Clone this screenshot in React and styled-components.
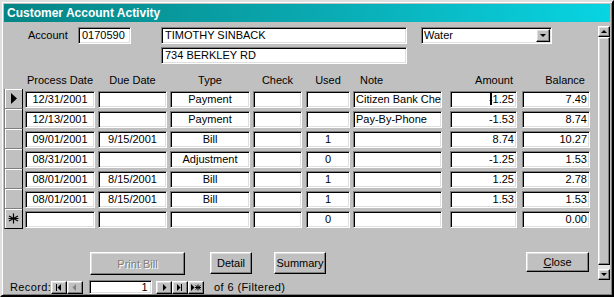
import React from "react";
import styled, { createGlobalStyle, css } from "styled-components";

const GlobalStyle = createGlobalStyle`
  html, body {
    margin: 0;
    padding: 0;
    background: #c0c0c0;
  }
  * { box-sizing: border-box; }
`;

const cols = [
  { key: "pd", w: 70, ml: 2, align: "center", head: "Process Date" },
  { key: "dd", w: 69, ml: 3, align: "center", head: "Due Date" },
  { key: "type", w: 80, ml: 3, align: "center", head: "Type" },
  { key: "check", w: 49, ml: 3, align: "center", head: "Check" },
  { key: "used", w: 44, ml: 4, align: "center", head: "Used" },
  { key: "note", w: 89, ml: 3, align: "left", head: "Note", hpad: "0 0 0 7px" },
  { key: "amt", w: 67, ml: 8, align: "right", head: "Amount", hpad: "0 4px 0 0" },
  { key: "bal", w: 68, ml: 5, align: "right", head: "Balance", hpad: "0 5px 0 0" },
];

const rows = [
  { pd: "12/31/2001", dd: "", type: "Payment", check: "", used: "", note: "Citizen Bank Checking", amt: "-1.25", bal: "7.49", current: true },
  { pd: "12/13/2001", dd: "", type: "Payment", check: "", used: "", note: "Pay-By-Phone", amt: "-1.53", bal: "8.74" },
  { pd: "09/01/2001", dd: "9/15/2001", type: "Bill", check: "", used: "1", note: "", amt: "8.74", bal: "10.27" },
  { pd: "08/31/2001", dd: "", type: "Adjustment", check: "", used: "0", note: "", amt: "-1.25", bal: "1.53" },
  { pd: "08/01/2001", dd: "8/15/2001", type: "Bill", check: "", used: "1", note: "", amt: "1.25", bal: "2.78" },
  { pd: "08/01/2001", dd: "8/15/2001", type: "Bill", check: "", used: "1", note: "", amt: "1.53", bal: "1.53" },
  { pd: "", dd: "", type: "", check: "", used: "0", note: "", amt: "", bal: "0.00", isNew: true },
];

const sunken = css`
  background: #fff;
  border-top: 1px solid #808080;
  border-left: 1px solid #808080;
  border-bottom: 1px solid #fff;
  border-right: 1px solid #fff;
  box-shadow: inset 1px 1px #000, inset -1px -1px #dfdfdf;
`;

const raised = css`
  background: #c0c0c0;
  border-top: 1px solid #fff;
  border-left: 1px solid #fff;
  border-bottom: 1px solid #000;
  border-right: 1px solid #000;
  box-shadow: inset -1px -1px #808080, inset 1px 1px #dfdfdf;
`;

const Window = styled.div`
  width: 614px;
  height: 297px;
  padding: 2px;
  border: 2px solid;
  border-color: #dfdfdf #000 #000 #dfdfdf;
  box-shadow: inset 1px 1px #fff, inset -1px -1px #808080;
  background: #c0c0c0;
  display: flex;
  flex-direction: column;
  font-family: "Liberation Sans", Arial, sans-serif;
  font-size: 11px;
  color: #000;
  overflow: hidden;
`;

const TitleBar = styled.div`
  height: 18px;
  flex: none;
  display: flex;
  align-items: center;
  padding-left: 3px;
  background: linear-gradient(to right, #058585, #0aa8b0 50%, #08d4e2);
  color: #fff;
  font-weight: bold;
  font-size: 12px;
`;

const Body = styled.div`
  height: 258px;
  flex: none;
  display: flex;
`;

const Content = styled.div`
  flex: 1;
  display: flex;
  flex-direction: column;
  padding-top: 5px;
`;

const FormRow = styled.div`
  display: flex;
  align-items: flex-start;
  margin-top: ${(p) => p.$mt || 0}px;
`;

const Label = styled.div`
  width: 74px;
  height: 17px;
  line-height: 17px;
  padding-left: 24px;
`;

const TextBox = styled.div`
  ${sunken};
  width: ${(p) => p.$w}px;
  height: 17px;
  margin-left: ${(p) => p.$ml || 0}px;
  padding: 0 3px;
  line-height: 15px;
  white-space: nowrap;
  overflow: hidden;
`;

const Combo = styled.div`
  ${sunken};
  width: 131px;
  height: 17px;
  margin-left: 14px;
  display: flex;
  align-items: stretch;
  padding: 1px 1px 1px 2px;
`;

const ComboText = styled.div`
  flex: 1;
  line-height: 13px;
`;

const DropButton = styled.div`
  ${raised};
  width: 14px;
  display: flex;
  align-items: center;
  justify-content: center;
`;

const HeaderRow = styled.div`
  display: flex;
  height: 19px;
  margin-top: 6px;
  align-items: center;
`;

const HeadCell = styled.div`
  width: ${(p) => p.$w}px;
  margin-left: ${(p) => p.$ml}px;
  text-align: ${(p) => p.$align};
  padding: ${(p) => p.$pad || 0};
  white-space: nowrap;
`;

const GridRow = styled.div`
  display: flex;
  height: 20px;
`;

const Selector = styled.div`
  width: 19px;
  height: 20px;
  flex: none;
  background: #c0c0c0;
  border-left: 1px solid #808080;
  border-right: 1px solid #000;
  border-bottom: 1px solid ${(p) => (p.$last ? "#000" : "#808080")};
  box-shadow: inset 1px 1px #fff;
  display: flex;
  align-items: center;
  justify-content: center;
`;

const Cell = styled.div`
  ${sunken};
  width: ${(p) => p.$w}px;
  height: 17px;
  margin-top: 2px;
  margin-left: ${(p) => p.$ml}px;
  text-align: ${(p) => p.$align};
  padding: 0 2px;
  line-height: 15px;
  white-space: nowrap;
  overflow: hidden;
  position: relative;
`;

const Caret = styled.span`
  position: relative;
  &::after {
    content: "";
    position: absolute;
    left: 1px;
    top: -1px;
    width: 2px;
    height: 13px;
    background: #000;
  }
`;

const ButtonRow = styled.div`
  display: flex;
  align-items: flex-start;
  margin-top: 23px;
  padding-right: 9px;
`;

const Button = styled.div`
  ${raised};
  width: ${(p) => p.$w}px;
  height: ${(p) => p.$h || 22}px;
  margin-left: ${(p) => (p.$ml === "auto" ? "auto" : `${p.$ml}px`)};
  display: flex;
  align-items: center;
  justify-content: center;
  font-size: 11px;
  color: ${(p) => (p.$disabled ? "#808080" : "#000")};
  text-shadow: ${(p) => (p.$disabled ? "1px 1px #fff" : "none")};
  u { text-decoration: underline; }
`;

const ScrollBar = styled.div`
  width: 12px;
  flex: none;
  margin-top: 4px;
  display: flex;
  flex-direction: column;
  background: #e4e4e4;
`;

const ScrollButton = styled.div`
  ${raised};
  height: 11px;
  flex: none;
  display: flex;
  align-items: center;
  justify-content: center;
`;

const Thumb = styled.div`
  ${raised};
  flex: 1;
  margin-bottom: 4px;
`;

const NavBar = styled.div`
  height: 14px;
  flex: none;
  display: flex;
  align-items: center;
  font-size: 11px;
  letter-spacing: 0.4px;
`;

const NavLabel = styled.div`
  padding-left: 6px;
  width: 47px;
`;

const NavButton = styled.div`
  ${raised};
  width: 16px;
  height: 13px;
  display: flex;
  align-items: center;
  justify-content: center;
  margin-left: ${(p) => p.$ml || 0}px;
`;

const NavBox = styled.div`
  ${sunken};
  width: 63px;
  height: 14px;
  margin-left: 6px;
  text-align: right;
  padding-right: 3px;
  line-height: 12px;
`;

const NavText = styled.div`
  margin-left: 10px;
`;

const Tri = ({ dir = "down", color = "#000" }) => {
  const pts = {
    down: "0,0 6,0 3,3",
    up: "0,3 6,3 3,0",
  }[dir];
  return (
    <svg width="7" height="4" viewBox="0 0 7 4">
      <polygon points={pts} fill={color} />
    </svg>
  );
};

const NavIcon = ({ kind }) => {
  const c = kind === "prev" ? "#808080" : "#000";
  return (
    <svg width="10" height="7" viewBox="0 0 10 7">
      {kind === "first" && (
        <>
          <rect x="2" y="0" width="1" height="7" fill={c} />
          <polygon points="7,0 7,7 3.5,3.5" fill={c} />
        </>
      )}
      {kind === "prev" && <polygon points="6,0 6,7 2.5,3.5" fill={c} />}
      {kind === "next" && <polygon points="4,0 4,7 7.5,3.5" fill={c} />}
      {kind === "last" && (
        <>
          <polygon points="2,0 2,7 5.5,3.5" fill={c} />
          <rect x="6" y="0" width="1" height="7" fill={c} />
        </>
      )}
      {kind === "new" && (
        <>
          <polygon points="0,0 0,7 3.5,3.5" fill={c} />
          <path d="M7 0.5V6.5M4.5 1.5L9.5 5.5M9.5 1.5L4.5 5.5M4 3.5H10" stroke={c} strokeWidth="1" />
        </>
      )}
    </svg>
  );
};

const Pointer = () => (
  <svg width="6" height="11" viewBox="0 0 6 11">
    <polygon points="0,0 6,5.5 0,11" fill="#000" />
  </svg>
);

const Star = () => (
  <svg width="11" height="11" viewBox="0 0 11 11">
    <path d="M5.5 0.5V10.5M1 3L10 8M10 3L1 8M0.5 5.5H10.5" stroke="#000" strokeWidth="1.2" />
  </svg>
);

export default function App() {
  return (
    <>
      <GlobalStyle />
      <Window>
        <TitleBar>Customer Account Activity</TitleBar>
        <Body>
          <Content>
            <FormRow>
              <Label>Account</Label>
              <TextBox $w={53}>0170590</TextBox>
              <TextBox $w={246} $ml={30}>TIMOTHY SINBACK</TextBox>
              <Combo>
                <ComboText>Water</ComboText>
                <DropButton>
                  <Tri />
                </DropButton>
              </Combo>
            </FormRow>
            <FormRow $mt={3}>
              <TextBox $w={246} $ml={157}>734 BERKLEY RD</TextBox>
            </FormRow>

            <HeaderRow>
              <div style={{ width: 19 }} />
              {cols.map((c) => (
                <HeadCell key={c.key} $w={c.w} $ml={c.ml} $align={c.align} $pad={c.hpad}>
                  {c.head}
                </HeadCell>
              ))}
            </HeaderRow>

            {rows.map((r, i) => (
              <GridRow key={i}>
                <Selector $last={r.isNew}>
                  {r.current && <Pointer />}
                  {r.isNew && <Star />}
                </Selector>
                {cols.map((c) => (
                  <Cell key={c.key} $w={c.w} $ml={c.ml} $align={c.align}>
                    {r.current && c.key === "amt" ? (
                      <>
                        <Caret>-</Caret>1.25
                      </>
                    ) : (
                      r[c.key]
                    )}
                  </Cell>
                ))}
              </GridRow>
            ))}

            <ButtonRow>
              <Button $w={95} $h={23} $ml={86} $disabled>
                Print Bill
              </Button>
              <Button $w={42} $ml={25}>Detail</Button>
              <Button $w={52} $ml={22}>Summary</Button>
              <Button $w={63} $h={20} $ml="auto">
                <span><u>C</u>lose</span>
              </Button>
            </ButtonRow>
          </Content>
          <ScrollBar>
            <ScrollButton>
              <Tri dir="up" />
            </ScrollButton>
            <Thumb />
            <ScrollButton>
              <Tri />
            </ScrollButton>
          </ScrollBar>
        </Body>
        <NavBar>
          <NavLabel>Record:</NavLabel>
          <NavButton><NavIcon kind="first" /></NavButton>
          <NavButton><NavIcon kind="prev" /></NavButton>
          <NavBox>1</NavBox>
          <NavButton $ml={4}><NavIcon kind="next" /></NavButton>
          <NavButton><NavIcon kind="last" /></NavButton>
          <NavButton><NavIcon kind="new" /></NavButton>
          <NavText>of 6 (Filtered)</NavText>
        </NavBar>
      </Window>
    </>
  );
}
